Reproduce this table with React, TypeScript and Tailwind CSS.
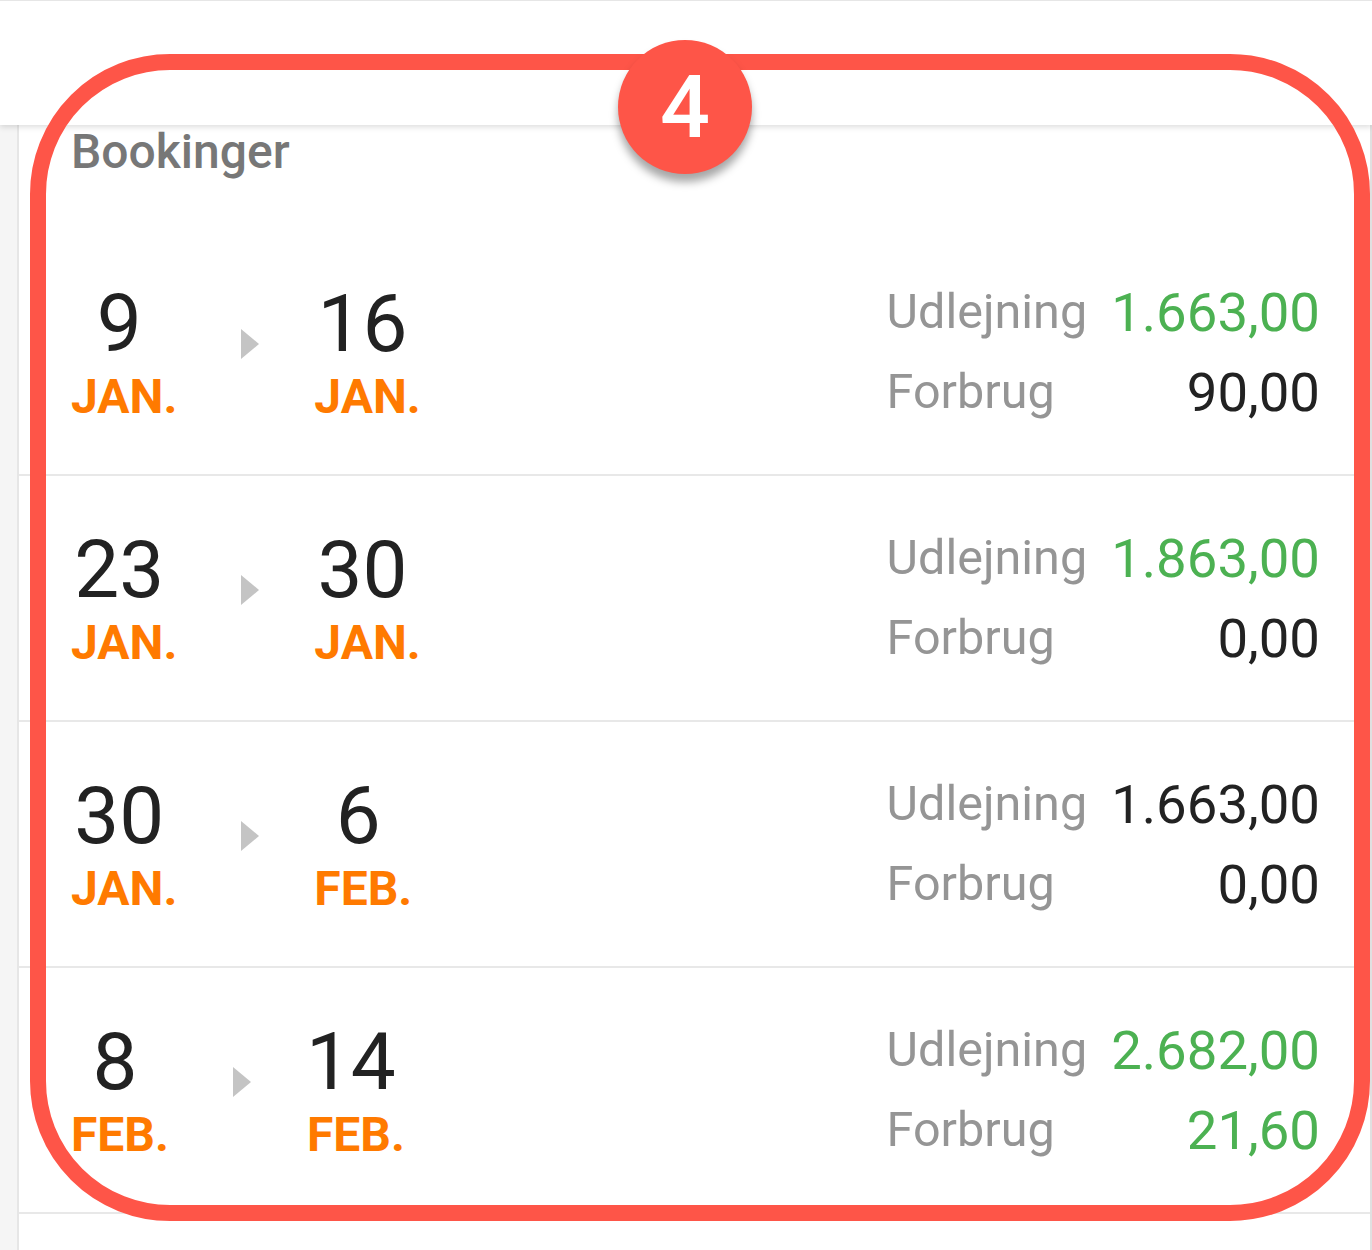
import React from "react";

type Booking = {
  d1: string;
  m1: string;
  d2: string;
  m2: string;
  rent: string;
  rentGreen: boolean;
  use: string;
  useGreen: boolean;
};

const bookings: Booking[] = [
  { d1: "9", m1: "JAN.", d2: "16", m2: "JAN.", rent: "1.663,00", rentGreen: true, use: "90,00", useGreen: false },
  { d1: "23", m1: "JAN.", d2: "30", m2: "JAN.", rent: "1.863,00", rentGreen: true, use: "0,00", useGreen: false },
  { d1: "30", m1: "JAN.", d2: "6", m2: "FEB.", rent: "1.663,00", rentGreen: false, use: "0,00", useGreen: false },
  { d1: "8", m1: "FEB.", d2: "14", m2: "FEB.", rent: "2.682,00", rentGreen: true, use: "21,60", useGreen: true },
];

function DateCol({ day, month }: { day: string; month: string }) {
  return (
    <div className="flex flex-col items-center">
      <div className="pr-[10px] text-[80px] leading-[80px] text-[#222222]">{day}</div>
      <div className="mt-[9px] text-[48px] leading-[48px] font-bold text-[#ff7a00]">{month}</div>
    </div>
  );
}

function Arrow() {
  return (
    <svg width="18" height="30" viewBox="0 0 18 30" className="ml-[64px] mr-[55px] mb-[16px] shrink-0">
      <path d="M0 0 L18 15 L0 30 Z" fill="#c4c4c4" />
    </svg>
  );
}

function Row({ b }: { b: Booking }) {
  return (
    <div className="h-[246px] border-b-2 border-[#e8e8e8] flex items-center pl-[52px] pr-[50px]">
      <div className="flex items-center">
        <DateCol day={b.d1} month={b.m1} />
        <Arrow />
        <DateCol day={b.d2} month={b.m2} />
      </div>
      <div className="ml-auto grid grid-cols-[auto_auto] gap-x-[24px]">
        <div className="text-[48.5px] leading-[80px] text-[#959595]">Udlejning</div>
        <div className={"text-[54.5px] leading-[80px] text-right " + (b.rentGreen ? "text-[#4cb152]" : "text-[#222222]")}>
          {b.rent}
        </div>
        <div className="text-[48.5px] leading-[80px] text-[#959595]">Forbrug</div>
        <div className={"text-[54.5px] leading-[80px] text-right " + (b.useGreen ? "text-[#4cb152]" : "text-[#222222]")}>
          {b.use}
        </div>
      </div>
    </div>
  );
}

export default function App() {
  return (
    <div className="relative w-[1372px] h-[1250px] bg-white overflow-hidden font-['Roboto',sans-serif]">
      <div className="relative z-10 h-[125px] bg-white border-t border-[#e6e6e6] shadow-[0_2px_6px_rgba(0,0,0,0.14)]" />
      <div className="flex h-[1125px]">
        <div className="w-[19px] shrink-0 bg-[#f5f5f5] border-r-2 border-[#e6e6e6]" />
        <div className="flex-1 border-r-2 border-[#e0e0e0]">
          <div className="h-[105px] pl-[52px] pt-[3px] text-[48px] leading-[48px] font-medium text-[#777777]">
            Bookinger
          </div>
          {bookings.map((b, i) => (
            <Row key={i} b={b} />
          ))}
        </div>
      </div>

      {/* annotation overlay */}
      <div className="absolute left-[30px] top-[54px] w-[1340px] h-[1167px] border-[16px] border-[#fe5548] rounded-[140px] z-20 pointer-events-none" />
      <div className="absolute left-[618px] top-[40px] w-[134px] h-[134px] rounded-full bg-[#fe5548] z-30 shadow-[0_8px_8px_rgba(0,0,0,0.35)] flex items-center justify-center">
        <span className="text-white text-[88px] leading-none font-medium">4</span>
      </div>
    </div>
  );
}
